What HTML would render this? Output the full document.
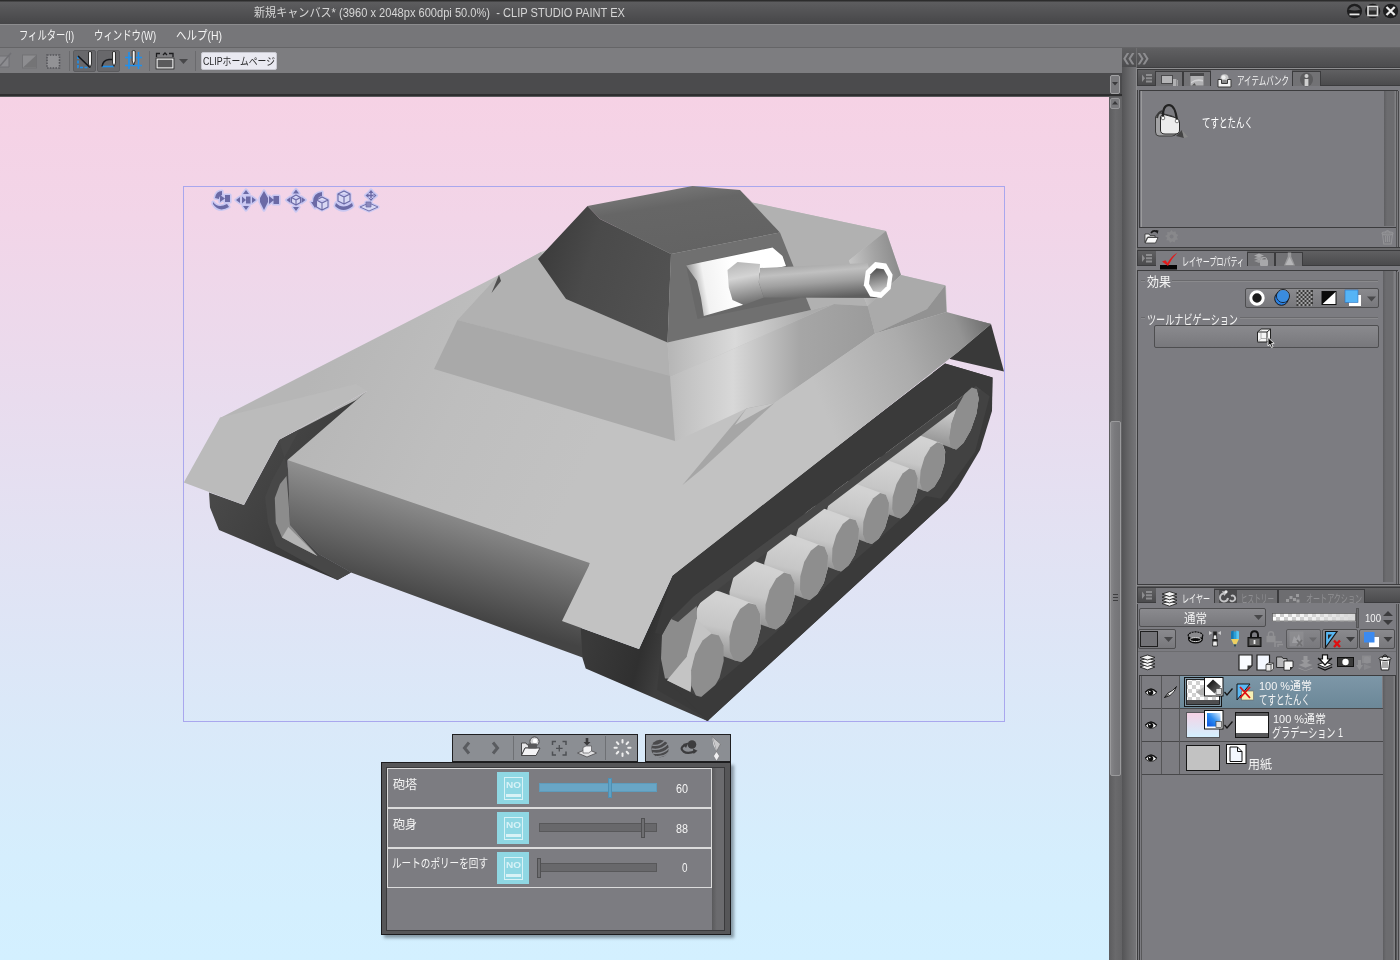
<!DOCTYPE html>
<html lang="ja">
<head>
<meta charset="utf-8">
<title>CLIP STUDIO PAINT EX</title>
<style>
*{box-sizing:border-box;margin:0;padding:0}
html,body{width:1400px;height:960px;overflow:hidden;background:#7d7d82}
body{position:relative;font-family:"Liberation Sans","Noto Sans CJK JP",sans-serif;color:#f0f0f0;font-size:12px;line-height:1}
.abs{position:absolute}
.tx{position:absolute;white-space:pre;line-height:1;color:#f4f4f4;will-change:transform}
svg{position:absolute;overflow:visible}
#titlebar{left:0;top:0;width:1400px;height:24px;background:linear-gradient(#2c2c2c 0,#2c2c2c 1px,#5d5d5f 2px,#464648 100%)}
#menubar{left:0;top:24px;width:1400px;height:24px;background:#767679;border-top:1px solid #8c8c8e;border-bottom:1px solid #656567}
#toolbar{left:0;top:48px;width:1122px;height:25px;background:#7d7d80}
#tabband{left:0;top:73px;width:1122px;height:22px;background:#4b4b4d}
#tabline{left:0;top:94px;width:1122px;height:3px;background:linear-gradient(#2e2e2f 0,#2e2e2f 2px,#5a5a5c 2px)}
#canvas{left:0;top:97px;width:1109px;height:863px;background:linear-gradient(#f6d2e5 0,#f2d5e8 14%,#e9dcee 35%,#e2e2f3 52%,#dbe8f8 70%,#d5eefd 88%,#d3f0ff 100%)}
#vscroll{left:1109px;top:97px;width:13px;height:863px;background:linear-gradient(90deg,#5c5c5e,#6a6a6c 50%,#636365)}
#splitter{left:1122px;top:67px;width:15px;height:893px;background:linear-gradient(90deg,#545456,#68686a 50%,#757578 93%,#8c8c8e 94%)}
#dockhead{left:1122px;top:48px;width:278px;height:20px;background:linear-gradient(#606062,#4c4c4e);border-bottom:1px solid #3e3e40}
#rightbg{left:1137px;top:68px;width:263px;height:892px;background:#5a5a5c}
</style>
</head>
<body>
<div id="titlebar" class="abs"></div>
<div class="tx" style="left:254px;top:7px;font-size:12px;color:#d6d6d6"><span style="display:inline-block;transform-origin:0 50%;transform:scaleX(0.9240)">新規キャンバス* (3960 x 2048px 600dpi 50.0%)  - CLIP STUDIO PAINT EX</span></div>
<div id="menubar" class="abs"></div>
<div class="tx" style="left:19px;top:30px;font-size:12.5px"><span style="display:inline-block;transform-origin:0 50%;transform:scaleX(0.7426)">フィルター(I)</span></div>
<div class="tx" style="left:94px;top:30px;font-size:12.5px"><span style="display:inline-block;transform-origin:0 50%;transform:scaleX(0.7504)">ウィンドウ(W)</span></div>
<div class="tx" style="left:176px;top:30px;font-size:12.5px"><span style="display:inline-block;transform-origin:0 50%;transform:scaleX(0.8385)">ヘルプ(H)</span></div>
<div id="toolbar" class="abs"></div>
<div id="tabband" class="abs"></div>
<div id="tabline" class="abs"></div>
<div id="canvas" class="abs"></div>
<div id="vscroll" class="abs"></div>
<div id="dockhead" class="abs"></div>
<div id="rightbg" class="abs"></div>
<div id="splitter" class="abs"></div>
<svg id="tank" style="left:0;top:0" width="1400" height="960" viewBox="0 0 1400 960">
<defs>
<linearGradient id="gHullFront" gradientUnits="userSpaceOnUse" x1="440" y1="500" x2="412" y2="600"><stop offset="0" stop-color="#929292"/><stop offset="0.4" stop-color="#727272"/><stop offset="1" stop-color="#444444"/></linearGradient>
<linearGradient id="gTurL" gradientUnits="userSpaceOnUse" x1="540" y1="260" x2="670" y2="300"><stop offset="0" stop-color="#3c3c3c"/><stop offset="0.35" stop-color="#4a4a4a"/><stop offset="1" stop-color="#525252"/></linearGradient>
<linearGradient id="gTurTop" gradientUnits="userSpaceOnUse" x1="690" y1="186" x2="700" y2="250"><stop offset="0" stop-color="#757575"/><stop offset="0.25" stop-color="#666"/><stop offset="1" stop-color="#636363"/></linearGradient>
<linearGradient id="gSide" gradientUnits="userSpaceOnUse" x1="670" y1="0" x2="880" y2="0"><stop offset="0" stop-color="#bcbcbc"/><stop offset="0.3" stop-color="#d8d8d8"/><stop offset="0.62" stop-color="#a6a6a6"/><stop offset="1" stop-color="#9a9a9a"/></linearGradient>
<linearGradient id="gDeck" gradientUnits="userSpaceOnUse" x1="665" y1="0" x2="840" y2="0"><stop offset="0" stop-color="#b4b4b4"/><stop offset="0.4" stop-color="#dadada"/><stop offset="0.8" stop-color="#acacac"/><stop offset="1" stop-color="#a8a8a8"/></linearGradient>
<linearGradient id="gRearBox" gradientUnits="userSpaceOnUse" x1="852" y1="270" x2="900" y2="262"><stop offset="0" stop-color="#c4c4c4"/><stop offset="0.5" stop-color="#a4a4a4"/><stop offset="1" stop-color="#8a8a8a"/></linearGradient>
<linearGradient id="gBarrel" gradientUnits="userSpaceOnUse" x1="815" y1="263" x2="818" y2="299"><stop offset="0" stop-color="#a6a6a6"/><stop offset="0.25" stop-color="#c0c0c0"/><stop offset="0.55" stop-color="#a0a0a0"/><stop offset="0.85" stop-color="#747474"/><stop offset="1" stop-color="#5e5e5e"/></linearGradient>
<linearGradient id="gCollar" gradientUnits="userSpaceOnUse" x1="740" y1="262" x2="748" y2="305"><stop offset="0" stop-color="#b8b8b8"/><stop offset="0.35" stop-color="#d4d4d4"/><stop offset="0.7" stop-color="#9c9c9c"/><stop offset="1" stop-color="#6c6c6c"/></linearGradient>
<linearGradient id="gMant" gradientUnits="userSpaceOnUse" x1="690" y1="292" x2="735" y2="284"><stop offset="0" stop-color="#8e8e8e"/><stop offset="0.35" stop-color="#f2f2f2"/><stop offset="1" stop-color="#ffffff"/></linearGradient>
<linearGradient id="gHole" gradientUnits="userSpaceOnUse" x1="876" y1="268" x2="881" y2="293"><stop offset="0" stop-color="#4e4e4e"/><stop offset="0.5" stop-color="#909090"/><stop offset="1" stop-color="#d0d0d0"/></linearGradient>
<linearGradient id="gFendR" gradientUnits="userSpaceOnUse" x1="820" y1="400" x2="995" y2="330"><stop offset="0" stop-color="#c2c2c2"/><stop offset="0.5" stop-color="#acacac"/><stop offset="0.82" stop-color="#949494"/><stop offset="1" stop-color="#6a6a6a"/></linearGradient>
<linearGradient id="gGlacis" gradientUnits="userSpaceOnUse" x1="300" y1="400" x2="560" y2="520"><stop offset="0" stop-color="#b6b6b6"/><stop offset="0.5" stop-color="#bebebe"/><stop offset="1" stop-color="#c2c2c2"/></linearGradient>
<linearGradient id="gLTrack" gradientUnits="userSpaceOnUse" x1="215" y1="500" x2="340" y2="575"><stop offset="0" stop-color="#484848"/><stop offset="1" stop-color="#343434"/></linearGradient>
<linearGradient id="gTrkFront" gradientUnits="userSpaceOnUse" x1="585" y1="650" x2="660" y2="670"><stop offset="0" stop-color="#3a3a3a"/><stop offset="0.7" stop-color="#303030"/><stop offset="1" stop-color="#3e3e3e"/></linearGradient>
<linearGradient id="gw0" gradientUnits="userSpaceOnUse" x1="954.0" y1="385.5" x2="942.0" y2="451.5"><stop offset="0" stop-color="#d2d2d2"/><stop offset="0.45" stop-color="#c6c6c6"/><stop offset="1" stop-color="#8a8a8a"/></linearGradient>
<linearGradient id="gw1" gradientUnits="userSpaceOnUse" x1="922.5" y1="441.0" x2="910.5" y2="493.0"><stop offset="0" stop-color="#d2d2d2"/><stop offset="0.45" stop-color="#c6c6c6"/><stop offset="1" stop-color="#8a8a8a"/></linearGradient>
<linearGradient id="gw2" gradientUnits="userSpaceOnUse" x1="895.0" y1="467.5" x2="883.0" y2="519.5"><stop offset="0" stop-color="#d2d2d2"/><stop offset="0.45" stop-color="#c6c6c6"/><stop offset="1" stop-color="#8a8a8a"/></linearGradient>
<linearGradient id="gw3" gradientUnits="userSpaceOnUse" x1="866.0" y1="492.0" x2="854.0" y2="545.0"><stop offset="0" stop-color="#d2d2d2"/><stop offset="0.45" stop-color="#c6c6c6"/><stop offset="1" stop-color="#8a8a8a"/></linearGradient>
<linearGradient id="gw4" gradientUnits="userSpaceOnUse" x1="835.5" y1="517.5" x2="823.5" y2="572.5"><stop offset="0" stop-color="#d2d2d2"/><stop offset="0.45" stop-color="#c6c6c6"/><stop offset="1" stop-color="#8a8a8a"/></linearGradient>
<linearGradient id="gw5" gradientUnits="userSpaceOnUse" x1="804.0" y1="544.0" x2="792.0" y2="601.0"><stop offset="0" stop-color="#d2d2d2"/><stop offset="0.45" stop-color="#c6c6c6"/><stop offset="1" stop-color="#8a8a8a"/></linearGradient>
<linearGradient id="gw6" gradientUnits="userSpaceOnUse" x1="770.0" y1="571.5" x2="758.0" y2="630.5"><stop offset="0" stop-color="#d2d2d2"/><stop offset="0.45" stop-color="#c6c6c6"/><stop offset="1" stop-color="#8a8a8a"/></linearGradient>
<linearGradient id="gw7" gradientUnits="userSpaceOnUse" x1="735.0" y1="602.0" x2="723.0" y2="663.0"><stop offset="0" stop-color="#d2d2d2"/><stop offset="0.45" stop-color="#c6c6c6"/><stop offset="1" stop-color="#8a8a8a"/></linearGradient>
</defs>
<rect x="183.500" y="186.500" width="821" height="535" fill="none" stroke="#a9a7ee" stroke-width="1"/>
<!-- rear right fender underside -->
<polygon points="946,313 991,324 1004,371.500 950,359 946,345" fill="#393939"/>
<!-- right track base -->
<polygon points="672.500,575.500 700,552 945,363.500 992.500,377.500 992,411 980,450 958,487 948,500 707.500,721 655,692 652,640" fill="#3a3a3a"/>
<polygon points="579,628 562,621 639,649 672.500,575.500 662,640 657,690 709,720 707.500,721 585.700,668.600 580,650" fill="url(#gTrkFront)"/>
<!-- opening inner (slightly lighter dark) -->
<polygon points="696,597 976,386 990,395 975,452 940,500 700,698 666,679 661,658 662,635 671,619" fill="#424242"/>
<!-- wheels rear→front -->
<polygon points="909.4,423.4 911.6,408.5 917.2,392.3 924.6,379.2 931.8,372.7 937.0,374.4 977.0,389.2 978.6,398.9 976.4,413.7 970.8,429.9 963.4,443.0 956.2,449.5 951.0,447.8 911.0,432.9" fill="url(#gw0)"/>
<polygon points="970.8,429.9 963.4,443.0 956.2,449.5 951.1,447.8 949.4,438.1 951.6,423.3 957.2,407.1 964.6,394.0 971.8,387.5 976.9,389.2 978.6,398.9 976.4,413.7" fill="#8e8e8e"/>
<polygon points="883.8,469.0 884.6,457.1 888.5,444.2 894.6,433.9 901.2,428.9 906.5,430.5 942.5,443.8 945.2,451.6 944.4,463.6 940.5,476.5 934.4,486.8 927.8,491.8 922.5,490.2 886.5,476.9" fill="url(#gw1)"/>
<polygon points="940.5,476.5 934.4,486.8 927.8,491.8 922.5,490.2 919.8,482.3 920.6,470.4 924.5,457.5 930.6,447.2 937.2,442.2 942.5,443.8 945.2,451.7 944.4,463.6" fill="#8e8e8e"/>
<polygon points="856.2,495.6 856.7,483.6 860.5,470.7 866.6,460.3 873.4,455.3 878.9,456.9 914.9,470.2 917.8,478.1 917.3,490.1 913.5,503.0 907.4,513.4 900.6,518.4 895.1,516.8 859.1,503.4" fill="url(#gw2)"/>
<polygon points="913.5,503.0 907.4,513.4 900.6,518.4 895.1,516.8 892.2,508.9 892.7,496.9 896.5,484.0 902.6,473.6 909.4,468.6 914.9,470.2 917.8,478.1 917.3,490.1" fill="#8e8e8e"/>
<polygon points="827.0,520.9 827.3,508.7 831.1,495.5 837.3,484.9 844.2,479.8 849.9,481.4 885.9,494.7 889.0,502.8 888.7,515.0 884.9,528.2 878.7,538.8 871.8,543.9 866.1,542.3 830.1,529.0" fill="url(#gw3)"/>
<polygon points="884.9,528.2 878.7,538.8 871.8,543.9 866.1,542.3 863.0,534.3 863.3,522.0 867.1,508.8 873.3,498.2 880.2,493.1 885.9,494.7 889.0,502.7 888.7,515.0" fill="#8e8e8e"/>
<polygon points="796.0,548.0 796.4,535.3 800.3,521.6 806.7,510.6 813.8,505.3 819.8,507.0 855.8,520.3 859.0,528.6 858.6,541.4 854.7,555.0 848.3,566.0 841.2,571.4 835.2,569.7 799.2,556.4" fill="url(#gw4)"/>
<polygon points="854.7,555.0 848.3,566.0 841.2,571.4 835.2,569.7 832.0,561.4 832.4,548.6 836.3,535.0 842.7,524.0 849.8,518.6 855.8,520.3 859.0,528.6 858.6,541.4" fill="#8e8e8e"/>
<polygon points="764.0,576.2 764.3,563.0 768.2,548.8 774.8,537.4 782.2,531.8 788.5,533.5 824.5,546.8 828.0,555.5 827.7,568.6 823.8,582.9 817.2,594.3 809.8,599.9 803.5,598.2 767.5,584.8" fill="url(#gw5)"/>
<polygon points="823.8,582.9 817.2,594.3 809.8,599.9 803.5,598.2 800.0,589.5 800.3,576.4 804.2,562.1 810.8,550.7 818.2,545.1 824.5,546.8 828.0,555.5 827.7,568.6" fill="#8e8e8e"/>
<polygon points="729.5,605.4 729.5,591.7 733.5,577.0 740.2,565.1 748.0,559.3 754.7,561.0 790.7,574.4 794.5,583.3 794.5,597.0 790.5,611.7 783.8,623.6 776.0,629.4 769.3,627.6 733.3,614.3" fill="url(#gw6)"/>
<polygon points="790.5,611.7 783.8,623.6 776.0,629.4 769.3,627.6 765.4,618.7 765.5,605.0 769.5,590.3 776.2,578.4 784.0,572.6 790.7,574.4 794.6,583.3 794.5,597.0" fill="#8e8e8e"/>
<polygon points="693.4,623.4 697.2,608.1 704.2,595.8 712.5,589.7 719.8,591.5 755.8,604.8 760.2,614.1 760.6,628.2 756.8,643.6 749.8,655.9 741.5,662.0 734.2,660.2 698.2,646.9 693.8,637.6" fill="url(#gw7)"/>
<polygon points="756.8,643.6 749.8,655.9 741.5,662.0 734.2,660.2 729.8,650.9 729.4,636.7 733.2,621.4 740.2,609.1 748.5,603.0 755.8,604.8 760.2,614.1 760.6,628.3" fill="#8e8e8e"/>
<!-- front sprocket -->
<polygon points="696.500,599 697,619 690,652 671,678.500 665,678.500 661,658.700 662,635 670.800,619" fill="#8c8c8c"/>
<polygon points="696.500,619 712,634 694,660 690.600,692 666.800,680.500 686.600,656.700" fill="#c4c4c4"/>
<polygon points="719.6,677.4 712.2,690.8 703.5,697.5 695.9,695.6 691.3,685.6 691.1,670.3 695.2,653.8 702.6,640.4 711.3,633.7 718.9,635.6 723.5,645.6 723.7,660.9" fill="#8e8e8e"/>
<!-- upper track band (covers wheel tops) -->
<polygon points="672.500,575.500 945,363.500 992.500,377.500 992,398 976,386 694,596 671,619 662,635 655,633" fill="#3a3a3a"/>
<polygon points="694,596 976,386 981,390 700,603 678,622 671,619" fill="#474747"/>
<!-- IDLERFACE -->
<polygon points="970.8,429.9 963.4,443.0 956.2,449.5 951.1,447.8 949.4,438.1 951.6,423.3 957.2,407.1 964.6,394.0 971.8,387.5 976.9,389.2 978.6,398.9 976.4,413.7" fill="#8e8e8e"/>
<!-- lower band -->
<polygon points="700,698 740,664 775,633 810,601.500 840,573 872,545.500 900,520 926,496 948,500 707.500,721 666,680" fill="#3a3a3a"/>
<!-- hull body silhouette (light) -->
<polygon points="220,418 499,275 541,252 600,230 752,202.500 886,231 901,275 946,286 947,313 991,324 958,352 672.500,575.500 600,552 593,566 287.500,461 279,440 367,391" fill="url(#gGlacis)"/>
<!-- hull front face -->
<polygon points="287.500,460 589.700,563 580.800,630 582.500,657.500 351,572.500 320,555 290,525" fill="url(#gHullFront)"/>
<!-- left track / underside dark -->
<polygon points="279,440 356,400 367,391 287.500,460 290,525 320,555 351,572.500 337.500,580 219,530 210,507.500 209,492.500 244,505" fill="url(#gLTrack)"/>
<polygon points="279,440 300,429 272,480 265,497 268,523 276,546 337.500,580 351,572.500 320,555 290,525 288,470" fill="#474747"/>
<polygon points="280,484 286.500,476 288.500,500 290,525 317.500,556 293.500,543.800 282,537.500 275.800,523 274.800,498" fill="#8c8c8c"/><polygon points="282,537.500 288.300,527 317.500,556 293.500,543.800" fill="#b4b4b4"/>
<!-- left fender -->
<polygon points="220,417.500 183.800,482.500 243.800,505 278.800,440 367,391 356,384" fill="#bbbbbb"/>
<!-- superstructure top left of turret -->
<polygon points="457.500,320 499,275 541,252 566,299 667.500,342.500 670,377" fill="#b1b1b1"/>
<!-- deck right/behind turret -->
<polygon points="740,190 752.500,202.500 886,231 848.800,260.500 867.500,306 834,304 811,310 780,232.500" fill="#b1b1b1"/>
<!-- deck in front of turret w/ highlight + side face -->
<polygon points="667.500,342.500 811,310 834,304 670,377" fill="url(#gDeck)"/>
<polygon points="670,377 834,304 868,306 875,333.600 774.300,403 746.400,408.600 674.600,441.800" fill="url(#gSide)"/>
<!-- rear box faces -->
<polygon points="886,231 901,275 867.500,306 848.800,260.500" fill="url(#gRearBox)"/>
<polygon points="867.500,306 901,275 945.300,285.300 927,309 875,333.600" fill="#aaaaaa"/><polygon points="945.300,285.300 946.500,312 875,333.600 927,309" fill="#929292"/>
<!-- right fender top -->
<polygon points="597.600,548 682,485 746.400,408.600 774.300,403 875,333.600 946.500,312 991,324 958,352 672.500,575.500 639,649 562,621" fill="url(#gFendR)"/>
<!-- groove on fender/hull -->
<polygon points="682.500,485 746.400,408.600 774.300,403 702,469" fill="#a6a6a6"/><polygon points="746.400,408.600 774.300,403 735,425" fill="#c6c6c6"/>
<!-- superstructure front slope -->
<polygon points="457.500,320 670,376 675,441 434,369" fill="#a9a9a9"/>
<!-- hull notch -->
<polygon points="499,275 501,281 491.500,293" fill="#505050"/>
<!-- turret -->
<polygon points="587.500,206 692.500,186 740,190 780,232.500 671,254 600,219" fill="url(#gTurTop)"/>
<polygon points="587.500,206 600,219 671,254 667.500,342.500 566,299 538,259" fill="url(#gTurL)"/>
<polygon points="671,254 780,232.500 811,310 667.500,342.500" fill="#707070"/>
<!-- mantlet recess -->
<polygon points="686,265 772,247 783,256 800,298 697.500,319" fill="#686868"/>
<polygon points="686,265.500 772.500,247.500 782.500,256 786,266 760,272 742.500,305 703.800,316 701,298 697,281" fill="url(#gMant)"/>
<polygon points="727.500,270 737.500,262 760,264 758.800,282.500 763.800,297.500 743.800,305 732.500,300 728.800,287.500" fill="url(#gCollar)"/>
<polygon points="760,268 867.500,263 877.500,298 763.800,297.500 758.800,282.500" fill="url(#gBarrel)"/>
<polygon points="890.6,289.0 881.3,298.0 870.2,296.4 863.8,285.2 865.8,271.0 875.1,262.0 886.2,263.6 892.6,274.8" fill="#fff"/>
<polygon points="886.6,286.3 880.5,292.3 873.2,291.3 869.0,283.8 870.4,274.3 876.5,268.3 883.8,269.3 888.0,276.8" fill="url(#gHole)"/>
</svg>
<svg style="left:210px;top:188px" width="172" height="26" viewBox="0 0 172 26">
<g stroke="#c9c8f2" stroke-width="3.200" stroke-linejoin="round" fill="#c9c8f2">
<path d="M5 10 Q6 3 12 3 L12 7 Q9 8 9 11Z M3 14 Q8 21 17 16 L19 19 Q9 25 3 16Z M10 7 L15 10.500 L10 14Z M15 7 H20 V14 H15Z"/>
<path d="M36 2 L39 6 H33Z M36 22 L39 18 H33Z M26 12 L30 9 V15Z M46 12 L42 9 V15Z M32 8.500 L36 12 L32 15.500Z M36 8.500 H40.500 V15.500 H36Z"/>
<path d="M54 3 L58 10 H50Z M54 22 L58 14 H50Z M50 10 H58 V14 H50Z M59 8 L64 12 L59 16Z M63.500 8 H69 V16 H63.500Z"/>
<path d="M86 1.500 L89 5.500 H83Z M86 23 L89 19 H83Z M76.500 12 L80.500 9 V15Z M95.500 12 L91.500 9 V15Z M86 7 L90.500 9.500 V14.500 L86 17 L81.500 14.500 V9.500Z"/>
<path d="M103 14 Q103 5 112 4 L112 8 Q107 9 107 14 L109 14 L105 20 L101 14Z M112 9 L118 12 V19 L112 22 L106.500 19 V12Z"/>
<path d="M134 3 L140 6 V13 L134 16 L128 13 V6Z M126 15 Q133 22 142 15 L143 18 Q133 26 125 18Z"/>
<path d="M161 2 L163.500 5 H158.500Z M161 13 L163.500 10 H158.500Z M155.500 7.500 L158.500 5 V10Z M166.500 7.500 L163.500 5 V10Z M150 19 L159 15 L168 19 L159 23Z M156 14 H161 V19 H156Z"/>
</g>
<g fill="#6b6aa6">
<path d="M5 10 Q6 3 12 3 L12 7 Q9 8 9 11Z M3 14 Q8 21 17 16 L19 19 Q9 25 3 16Z M10 7 L15 10.500 L10 14Z M15 7 H20 V14 H15Z"/>
<path d="M36 2 L39 6 H33Z M36 22 L39 18 H33Z M26 12 L30 9 V15Z M46 12 L42 9 V15Z M32 8.500 L36 12 L32 15.500Z M36 8.500 H40.500 V15.500 H36Z"/>
<path d="M54 3 L58 10 H50Z M54 22 L58 14 H50Z M50 10 H58 V14 H50Z M59 8 L64 12 L59 16Z M63.500 8 H69 V16 H63.500Z"/>
<path d="M86 1.500 L89 5.500 H83Z M86 23 L89 19 H83Z M76.500 12 L80.500 9 V15Z M95.500 12 L91.500 9 V15Z"/>
<path d="M103 14 Q103 5 112 4 L112 8 Q107 9 107 14 L109 14 L105 20 L101 14Z"/>
<path d="M126 15 Q133 22 142 15 L143 18 Q133 26 125 18Z"/>
<path d="M161 2 L163.500 5 H158.500Z M161 13 L163.500 10 H158.500Z M155.500 7.500 L158.500 5 V10Z M166.500 7.500 L163.500 5 V10Z M160.300 4 H161.700 V11 H160.300Z M157.500 6.800 H164.500 V8.200 H157.500Z"/>
</g>
<g fill="#d8d8f4" stroke="#6b6aa6" stroke-width="1.100" stroke-linejoin="round">
<path d="M86 7 L90.500 9.500 V14.500 L86 17 L81.500 14.500 V9.500Z M81.500 9.500 L86 12 L90.500 9.500 M86 12 V17"/>
<path d="M112 9 L118 12 V19 L112 22 L106.500 19 V12Z M106.500 12 L112 15 L118 12 M112 15 V22"/>
<path d="M134 3 L140 6 V13 L134 16 L128 13 V6Z M128 6 L134 9 L140 6 M134 9 V16"/>
<path d="M150 19 L159 15 L168 19 L159 23Z" stroke-width="0.900"/><path d="M156 14 H161 V19 H156Z" fill="#8a89bc" stroke-width="0.700"/>
</g>
</svg>


<!-- toolbar icons -->
<div class="abs" style="left:69px;top:51px;width:1px;height:20px;background:#6a6a6d"></div>
<div class="abs" style="left:149px;top:51px;width:1px;height:20px;background:#6a6a6d"></div>
<div class="abs" style="left:195px;top:51px;width:1px;height:20px;background:#6a6a6d"></div>
<div class="abs" style="left:73px;top:50px;width:23px;height:22px;background:#68686b;border:1px solid #5c5c5f;border-radius:2px"></div>
<div class="abs" style="left:97px;top:50px;width:23px;height:22px;background:#68686b;border:1px solid #5c5c5f;border-radius:2px"></div>
<svg style="left:0;top:48px" width="200" height="25" viewBox="0 0 200 25">
<g opacity="0.55"><path d="M0 8 H9 V19 H0" fill="#9a9a9d" stroke="#66666a" stroke-width="1"/><path d="M0 18 L11 5" stroke="#66666a" stroke-width="1.500"/></g>
<g opacity="0.6"><rect x="22.500" y="7" width="14" height="13" fill="#98989b" stroke="#6c6c6f" stroke-width="1"/><path d="M23 19.500 L36 7.500 L36 19.500Z" fill="#6e6e71"/></g>
<rect x="47" y="7" width="12.500" height="13" fill="#929295" stroke="#56565a" stroke-width="1.600" stroke-dasharray="1.600 1.200"/>
<!-- btn1 -->
<path d="M78 8 L78 19.500 L90 19.500" fill="none" stroke="#1e90ee" stroke-width="1.600" stroke-dasharray="3 1.500"/><path d="M78 8 L90 19.500" stroke="#16181c" stroke-width="1.600"/><path d="M88.500 4 Q90 3 91.500 4 L91.500 16 L90 19.500 L88.500 16Z" fill="#f2f2f2" stroke="#222" stroke-width="0.900"/>
<!-- btn2 -->
<path d="M102 18.500 H114 " stroke="#1e90ee" stroke-width="1.600"/><path d="M102 18.500 Q103 12 109 11.500 L114 11.500" fill="none" stroke="#16181c" stroke-width="1.600"/><path d="M112.500 4 Q114 3 115.500 4 L115.500 15 L114 18.500 L112.500 15Z" fill="#f2f2f2" stroke="#222" stroke-width="0.900"/>
<!-- icon3 -->
<path d="M125 9.500 H142 M125 17.500 H142 M129 4 V21 M138.500 4 V21" stroke="#1e90ee" stroke-width="1.600"/><path d="M132.200 3 Q133.700 2 135.200 3 L135.200 13 L133.700 17 L132.200 13Z" fill="#f2f2f2" stroke="#222" stroke-width="0.900"/>
<!-- frame icon -->
<path d="M156.500 9 V5.500 H160 M169 5.500 H173 V9 M163 7 L165 5 L167 7" fill="none" stroke="#1c1c1e" stroke-width="1.300"/><rect x="157" y="11" width="16" height="9" fill="#5a5a5c" stroke="#f4f4f4" stroke-width="1.300"/><rect x="156" y="10" width="18" height="11" fill="none" stroke="#222" stroke-width="0.700"/>
<path d="M179 11 H188 L183.500 16Z" fill="#48484a"/>
</svg>
<div class="abs" style="left:201px;top:52px;width:76px;height:18px;background:#e9e9f1;border:1px solid #c8c8d0;border-radius:2px"></div>
<div class="tx" style="left:203px;top:56px;font-size:10.5px;color:#2a2a2c"><span style="display:inline-block;transform-origin:0 50%;transform:scaleX(0.8389)">CLIPホームページ</span></div>
<!-- window buttons -->
<svg style="left:1346px;top:3px" width="54" height="18" viewBox="0 0 54 18">
<ellipse cx="8.500" cy="8" rx="7.600" ry="7.300" fill="#1e1e1f"/><ellipse cx="26.700" cy="8" rx="7.600" ry="7.300" fill="#1e1e1f"/><ellipse cx="44.600" cy="8" rx="7.600" ry="7.300" fill="#1e1e1f"/>
<path d="M2.500 6.500 Q8.500 -0.500 14.500 6.500 Q8.500 8.500 2.500 6.500Z" fill="#58585a"/><rect x="3.500" y="10.500" width="10" height="1.800" fill="#e8e8e8"/>
<rect x="22" y="3.500" width="9.500" height="9" fill="#2c2c2c" stroke="#d8d8d8" stroke-width="1.700"/><rect x="23" y="4.500" width="7.500" height="3" fill="#6a6a6c"/>
<path d="M40.500 4 L48.700 12 M48.700 4 L40.500 12" stroke="#ececec" stroke-width="2.200"/>
</svg>
<!-- canvas scrollbar buttons -->
<div class="abs" style="left:1110px;top:75px;width:10px;height:19px;background:#7a7a7d;border:1px solid #a2a2a4;border-radius:2px"></div>
<svg style="left:1112px;top:82px" width="6" height="4"><path d="M0 0H6L3 3.500Z" fill="#3a3a3c"/></svg>
<div class="abs" style="left:1110px;top:98px;width:10px;height:11px;background:#7a7a7d;border:1px solid #98989a;border-radius:2px"></div>
<svg style="left:1112px;top:101px" width="6" height="4"><path d="M0 3.500H6L3 0Z" fill="#3a3a3c"/></svg>
<div class="abs" style="left:1110px;top:421px;width:11px;height:355px;background:linear-gradient(90deg,#858588,#7a7a7d 40%,#737376);border:1px solid #9a9a9c;border-radius:2px"></div>
<svg style="left:1112.500px;top:594px" width="5" height="7"><path d="M0 0.500H5M0 3.500H5M0 6.500H5" stroke="#3e3e40" stroke-width="1"/></svg>

<style>
.tabbar{position:absolute;left:1137px;width:263px;height:17px;background:linear-gradient(#606062,#4b4b4d);border:1px solid #3c3c3e;border-right:none}
.tab{position:absolute;height:15px;background:#727275;border:1px solid #3c3c3e;border-bottom:none}
.tabA{position:absolute;height:21px;background:#7c7c81}
.pframe{position:absolute;left:1137px;width:263px;background:#7c7c81}
.pin{position:absolute;background:#7c7c81;border:1px solid #3c3c3e}
.vsb{position:absolute;width:12px;background:linear-gradient(90deg,#5e5e61,#6c6c6f 25%,#6c6c6f 80%,#858588)}
.btn{position:absolute;border:1px solid #4e4e50;border-radius:2px;background:linear-gradient(#8a8a8e,#78787c)}
.ham{position:absolute;width:10px;height:9px}
</style>
<!-- ===== dock head chevrons ===== -->
<svg style="left:1123px;top:52.500px" width="26" height="12" viewBox="0 0 26 12"><g fill="#8d8d90"><path d="M3.800 0 L6.200 0 L2.600 5.700 L6.200 11.400 L3.800 11.400 L0.200 5.700Z"/><path d="M9 0 L11.400 0 L7.800 5.700 L11.400 11.400 L9 11.400 L5.400 5.700Z"/><path d="M14.600 0 L17 0 L20.600 5.700 L17 11.400 L14.600 11.400 L18.200 5.700Z"/><path d="M19.600 0 L22 0 L25.600 5.700 L22 11.400 L19.600 11.400 L23.200 5.700Z"/></g></svg><div class="abs" style="left:1136px;top:48px;width:1px;height:20px;background:#6e6e70"></div>
<div class="abs" style="left:1137px;top:68px;width:263px;height:1px;background:#8e8e90"></div>

<!-- ===== Panel 1 : item bank ===== -->
<div class="pframe" style="top:69px;height:179px"></div>
<div class="tabbar" style="top:69px"></div>
<div class="tab" style="left:1155px;top:71px;width:28px"></div>
<div class="tab" style="left:1183px;top:71px;width:28px"></div>
<div class="tabA" style="left:1211px;top:70px;width:81px"></div>
<div class="tab" style="left:1292px;top:71px;width:29px"></div>
<div class="pin" style="left:1139px;top:90px;width:259px;height:138px"></div>
<div class="abs" style="left:1137px;top:90px;width:1px;height:158px;background:#3c3c3e"></div>
<div class="abs" style="left:1141px;top:91px;width:1px;height:136px;background:#9a9a9c"></div>
<div class="vsb" style="left:1384px;top:91px;height:135px"></div>
<div class="abs" style="left:1396px;top:91px;width:1px;height:136px;background:#3c3c3e"></div>
<div class="abs" style="left:1137px;top:247px;width:263px;height:3px;background:linear-gradient(#3c3c3e 0,#3c3c3e 1px,#6a6a6c 1px)"></div>
<div class="tx" style="left:1237px;top:75.500px;font-size:11.500px"><span style="display:inline-block;transform-origin:0 50%;transform:scaleX(0.6505)">アイテムバンク</span></div>
<div class="tx" style="left:1202px;top:116px;font-size:13px;color:#fff"><span style="display:inline-block;transform-origin:0 50%;transform:scaleX(0.6537)">てすとたんく</span></div>

<!-- ===== Panel 2 : layer property ===== -->
<div class="pframe" style="top:250px;height:335px"></div>
<div class="tabbar" style="top:250px;height:16px"></div>
<div class="tabA" style="left:1156px;top:251px;width:91px;height:20px"></div>
<div class="tab" style="left:1247px;top:252px;width:28px;height:14px"></div>
<div class="tab" style="left:1275px;top:252px;width:28px;height:14px"></div>
<div class="pin" style="left:1137px;top:270px;width:261px;height:315px;border-right:none"></div>
<div class="abs" style="left:1137px;top:270px;width:1px;height:316px;background:#3c3c3e"></div>
<div class="vsb" style="left:1383px;top:271px;height:311px"></div>
<div class="abs" style="left:1396px;top:271px;width:1px;height:311px;background:#3c3c3e"></div>
<div class="abs" style="left:1137px;top:584px;width:263px;height:3px;background:linear-gradient(#3c3c3e 0,#3c3c3e 1px,#88888a 1px,#88888a 2px,#5a5a5c 2px)"></div>
<div class="tx" style="left:1182px;top:256.500px;font-size:11.500px"><span style="display:inline-block;transform-origin:0 50%;transform:scaleX(0.6091)">レイヤープロパティ</span></div>
<div class="abs" style="left:1172px;top:280px;width:206px;height:2px;background:linear-gradient(#6a6a6d 0,#6a6a6d 1px,#8a8a8d 1px)"></div>
<div class="tx" style="left:1146.500px;top:274.500px;font-size:13px"><span style="display:inline-block;transform-origin:0 50%;transform:scaleX(0.9225)">効果</span></div>
<div class="btn" style="left:1245px;top:288px;width:134px;height:20px"></div>
<div class="abs" style="left:1240px;top:317px;width:138px;height:2px;background:linear-gradient(#6a6a6d 0,#6a6a6d 1px,#8a8a8d 1px)"></div><div class="abs" style="left:1141px;top:317px;width:4px;height:2px;background:linear-gradient(#6a6a6d 0,#6a6a6d 1px,#8a8a8d 1px)"></div><div class="abs" style="left:1141px;top:280px;width:4px;height:2px;background:linear-gradient(#6a6a6d 0,#6a6a6d 1px,#8a8a8d 1px)"></div>
<div class="tx" style="left:1146.500px;top:312.500px;font-size:13px"><span style="display:inline-block;transform-origin:0 50%;transform:scaleX(0.7013)">ツールナビゲーション</span></div>
<div class="btn" style="left:1154px;top:325px;width:225px;height:23px"></div>

<!-- ===== Panel 3 : layers ===== -->
<div class="pframe" style="top:587px;height:373px"></div>
<div class="tabbar" style="top:587px;height:16px"></div>
<div class="tabA" style="left:1156px;top:588px;width:58px;height:19px"></div>
<div class="tab" style="left:1214px;top:589px;width:64px;height:14px;background:#6d6d70"></div>
<div class="tab" style="left:1278px;top:589px;width:87px;height:14px;background:#6d6d70"></div>
<div class="tx" style="left:1182px;top:593.500px;font-size:11px"><span style="display:inline-block;transform-origin:0 50%;transform:scaleX(0.6411)">レイヤー</span></div>
<div class="tx" style="left:1241px;top:593.500px;font-size:11px;color:#909093"><span style="display:inline-block;transform-origin:0 50%;transform:scaleX(0.6000)">ヒストリー</span></div>
<div class="tx" style="left:1306px;top:593.500px;font-size:11px;color:#909093"><span style="display:inline-block;transform-origin:0 50%;transform:scaleX(0.6403)">オートアクション</span></div>
<div class="abs" style="left:1137px;top:604px;width:1px;height:356px;background:#3c3c3e"></div>
<!-- blend mode -->
<div class="btn" style="left:1139px;top:608px;width:127px;height:19px"></div>
<div class="tx" style="left:1184px;top:613px;font-size:12px"><span style="display:inline-block;transform-origin:0 50%;transform:scaleX(0.9577)">通常</span></div>
<svg style="left:1254px;top:615px" width="9" height="5"><path d="M0 0H9L4.5 5Z" fill="#48484a"/></svg>
<div class="tx" style="left:1364.500px;top:613px;font-size:11.500px"><span style="display:inline-block;transform-origin:0 50%;transform:scaleX(0.8339)">100</span></div>
<!-- layer list -->
<div class="pin" style="left:1139px;top:675px;width:259px;height:290px;border-bottom:none"></div>
<div class="abs" style="left:1141px;top:676px;width:1px;height:284px;background:#58585a"></div>
<div class="vsb" style="left:1383px;top:676px;height:284px"></div>
<div class="abs" style="left:1395px;top:676px;width:1px;height:284px;background:#3c3c3e"></div>
<div class="abs" style="left:1180px;top:676px;width:202px;height:33px;background:linear-gradient(#7d97a8,#6b8797)"></div>
<div class="abs" style="left:1142px;top:708px;width:241px;height:1px;background:#48484a"></div>
<div class="abs" style="left:1142px;top:741px;width:241px;height:1px;background:#48484a"></div>
<div class="abs" style="left:1142px;top:774px;width:241px;height:1px;background:#48484a"></div>
<div class="abs" style="left:1161px;top:676px;width:1px;height:98px;background:#555557"></div>
<div class="abs" style="left:1179px;top:676px;width:1px;height:98px;background:#555557"></div>
<div class="tx" style="left:1259px;top:680.500px;font-size:11.500px"><span style="display:inline-block;transform-origin:0 50%;transform:scaleX(0.9531)">100 %通常</span></div>
<div class="tx" style="left:1258.500px;top:693px;font-size:13px"><span style="display:inline-block;transform-origin:0 50%;transform:scaleX(0.6537)">てすとたんく</span></div>
<div class="tx" style="left:1272.500px;top:713.500px;font-size:11.500px"><span style="display:inline-block;transform-origin:0 50%;transform:scaleX(0.9531)">100 %通常</span></div>
<div class="tx" style="left:1271.500px;top:726px;font-size:13px"><span style="display:inline-block;transform-origin:0 50%;transform:scaleX(0.6989)">グラデーション 1</span></div>
<div class="tx" style="left:1248px;top:759px;font-size:12.500px"><span style="display:inline-block;transform-origin:0 50%;transform:scaleX(0.9594)">用紙</span></div>
<div class="abs redge" style="left:1396px;top:91px;width:4px;height:156px;background:linear-gradient(90deg,#555557 0,#555557 1px,#7a7a7d 1px,#7a7a7d 2px,#48484a 2px,#48484a 3px,#858588 3px)"></div>
<div class="abs redge" style="left:1396px;top:272px;width:4px;height:312px;background:linear-gradient(90deg,#555557 0,#555557 1px,#7a7a7d 1px,#7a7a7d 2px,#48484a 2px,#48484a 3px,#858588 3px)"></div>
<div class="abs redge" style="left:1396px;top:604px;width:4px;height:356px;background:linear-gradient(90deg,#555557 0,#555557 1px,#7a7a7d 1px,#7a7a7d 2px,#48484a 2px,#48484a 3px,#858588 3px)"></div>
<!-- hamburger icons -->
<svg style="left:1142px;top:74px" width="10" height="9" viewBox="0 0 10 9"><path d="M0 0.5L3 4.2L0 8Z M4 0h6v2H4z M4 3.2h6v2H4z M4 6.4h6v2H4z" fill="#8c8c8e"/></svg>
<svg style="left:1142px;top:254px" width="10" height="9" viewBox="0 0 10 9"><path d="M0 0.5L3 4.2L0 8Z M4 0h6v2H4z M4 3.2h6v2H4z M4 6.4h6v2H4z" fill="#8c8c8e"/></svg>
<svg style="left:1142px;top:590.500px" width="10" height="9" viewBox="0 0 10 9"><path d="M0 0.5L3 4.2L0 8Z M4 0h6v2H4z M4 3.2h6v2H4z M4 6.4h6v2H4z" fill="#8c8c8e"/></svg>
<!-- panel1 tab icons -->
<svg style="left:1161px;top:75px" width="17" height="11" viewBox="0 0 17 11"><rect x="0.5" y="0.5" width="11" height="8" fill="#b4b4b6" stroke="#4a4a4c"/><rect x="12" y="4" width="3.4" height="7" fill="#b0b0b2"/><rect x="16" y="5" width="1" height="6" fill="#a0a0a2"/></svg>
<svg style="left:1190px;top:73px" width="14" height="13" viewBox="0 0 14 13"><rect x="0" y="0" width="14" height="3" fill="#48484a"/><rect x="0.5" y="3" width="13" height="9.5" fill="#b0b0b2"/><path d="M1 9 Q6 5 13 7 L13 8.5 Q6 7 1 10.5Z" fill="#d0d0d2"/><path d="M2 12.5 L4.5 10 L6 12.5Z" fill="#555"/></svg>
<svg style="left:1217px;top:74px" width="15" height="14" viewBox="0 0 15 14"><circle cx="7.5" cy="4.2" r="4" fill="#c8c8c8"/><circle cx="6.6" cy="3.2" r="2" fill="#f0f0f0"/><rect x="5.2" y="6" width="4.6" height="4" fill="#888"/><path d="M1 5.5 L4.5 5.5 L4.5 9.5 L10.5 9.5 L10.5 5.5 L14 5.5 L14 13 L1 13Z" fill="#f4f4f4" stroke="#3a3a3a" stroke-width="1"/></svg>
<svg style="left:1300px;top:72px" width="13" height="14" viewBox="0 0 13 14"><ellipse cx="6.5" cy="7.5" rx="6.5" ry="7" fill="#5c5c5e"/><circle cx="6.5" cy="4" r="2" fill="#d0d0d0"/><rect x="4.6" y="7" width="3.8" height="7" fill="#d0d0d0"/></svg>
<!-- item icon (bag) -->
<svg style="left:1154px;top:103px" width="34" height="38" viewBox="0 0 34 38">
<path d="M1.5 14 Q2 11 6 10 L18 13 Q22 14 22 18 L22 30 Q22 33 18 33 L5 33 Q1.5 33 1.5 29Z" fill="#a2a2a4" stroke="#3a3a3a" stroke-width="1"/>
<path d="M6.5 14 Q7 11.5 10 11.5 L21 14.5 Q25.5 16 25.5 20 L25.5 27 Q25.5 31 21 31 L11 31 Q6.5 31 6.5 27Z" fill="#ececec" stroke="#2a2a2a" stroke-width="1"/>
<path d="M3 15 Q4 9 8.5 8" fill="none" stroke="#3a3a3a" stroke-width="2"/>
<path d="M9 14 Q8.5 2.5 15 2 Q21 2 23 17" fill="none" stroke="#222" stroke-width="2.2"/>
<circle cx="9" cy="15" r="1.8" fill="#fff" stroke="#333" stroke-width="0.6"/><circle cx="23" cy="18" r="1.8" fill="#fff" stroke="#333" stroke-width="0.6"/>
<path d="M22 33 L28 27 L30 35 Z" fill="#444"/><path d="M28 27 L34 34 L30 35Z" fill="#8a8a8a"/>
</svg>
<!-- panel1 bottom icons -->
<svg style="left:1144px;top:229px" width="15" height="15" viewBox="0 0 15 15"><path d="M1 5 L5 5 L6 6.5 L11 6.5 L11 8 L3.5 8 L1 13.5Z" fill="#f2f2f2" stroke="#333" stroke-width="0.8"/><path d="M3.8 8.5 L14 8.5 L11.5 14 L1.2 14Z" fill="#fafafa" stroke="#333" stroke-width="0.8"/><path d="M7 4 Q9.5 0.5 13 3" fill="none" stroke="#1a1a1a" stroke-width="1.6"/><path d="M11.5 1 L14.5 1.5 L13.5 5Z" fill="#1a1a1a"/></svg>
<svg style="left:1164px;top:229px" width="15" height="15" viewBox="0 0 15 15"><path d="M7.5 1 L9 3 L11.5 2.2 L12 4.8 L14.3 6 L12.8 8 L14 10.5 L11.5 11 L10.5 13.5 L8.3 12.2 L6 14 L5 11.5 L2.3 11.3 L3.2 8.8 L1 7 L3.4 5.7 L3.2 3 L5.8 3.2Z" fill="#88888b"/><circle cx="7.6" cy="7.6" r="2" fill="#7c7c81"/></svg>
<svg style="left:1381px;top:229px" width="13" height="16" viewBox="0 0 13 16"><g fill="none" stroke="#939396" stroke-width="1.1"><path d="M1.5 5 L2.8 15 L10.2 15 L11.5 5Z"/><ellipse cx="6.5" cy="4.5" rx="5.5" ry="1.6"/><path d="M4 4 Q6.5 -1 9 4"/><path d="M4.6 7V13M6.5 7V13M8.4 7V13"/></g></svg>
<!-- panel2 tab icons -->
<svg style="left:1159px;top:252px" width="20" height="18" viewBox="0 0 20 18"><rect x="1" y="13" width="17" height="4.5" fill="#050505"/><path d="M3 9.5 L6.5 8.2 L8.5 11 Q12 4.5 18.5 0.5 Q13 6 9 14 Z" fill="#e21a1a"/></svg>
<svg style="left:1253px;top:253px" width="16" height="13" viewBox="0 0 16 13"><g fill="#a8a8aa"><path d="M1 2.5 L6 0.5 L11 2.5 L6 4.5Z"/><path d="M1 5.3 L6 3.3 L11 5.3 L6 7.3Z" opacity=".8"/><path d="M1 8.1 L6 6.1 L11 8.1 L6 10.1Z" opacity=".7"/><rect x="7" y="6.5" width="8" height="6.5" rx="1"/></g><rect x="8.5" y="4.5" width="5" height="3" rx="1.5" fill="none" stroke="#a8a8aa" stroke-width="1"/></svg>
<svg style="left:1283px;top:252px" width="13" height="14" viewBox="0 0 13 14"><path d="M4.8 0.5 L8.2 0.5 L8.2 4.5 L12 13.5 L1 13.5 L4.8 4.5Z" fill="#9a9a9c"/><path d="M6.5 5 L10.5 13 L2.5 13Z" fill="#b6b6b8"/></svg>
<!-- effect icons -->
<svg style="left:1248px;top:289px" width="130" height="18" viewBox="0 0 130 18">
<circle cx="9" cy="9" r="6.2" fill="#1c1c1c" stroke="#fff" stroke-width="3"/>
<circle cx="33.5" cy="9.5" r="6.8" fill="#2a7fe0" stroke="#16181c" stroke-width="1"/><circle cx="35" cy="7" r="6.5" fill="none" stroke="#16181c" stroke-width="0.9"/><circle cx="35" cy="7" r="6" fill="#3a8cdf"/>
<rect x="48.500" y="1.000" width="16.500" height="16.000" fill="#3a3a3a"/>
<g fill="#a2a2a4"><rect x="48.5" y="1" width="2" height="2"/><rect x="52.5" y="1" width="2" height="2"/><rect x="56.5" y="1" width="2" height="2"/><rect x="60.500" y="1" width="2" height="2"/><rect x="50.5" y="3" width="2" height="2"/><rect x="54.5" y="3" width="2" height="2"/><rect x="58.5" y="3" width="2" height="2"/><rect x="62.5" y="3" width="2" height="2"/><rect x="48.5" y="5" width="2" height="2"/><rect x="52.5" y="5" width="2" height="2"/><rect x="56.5" y="5" width="2" height="2"/><rect x="60.500" y="5" width="2" height="2"/><rect x="50.5" y="7" width="2" height="2"/><rect x="54.5" y="7" width="2" height="2"/><rect x="58.5" y="7" width="2" height="2"/><rect x="62.5" y="7" width="2" height="2"/><rect x="48.5" y="9" width="2" height="2"/><rect x="52.5" y="9" width="2" height="2"/><rect x="56.5" y="9" width="2" height="2"/><rect x="60.500" y="9" width="2" height="2"/><rect x="50.5" y="11" width="2" height="2"/><rect x="54.5" y="11" width="2" height="2"/><rect x="58.5" y="11" width="2" height="2"/><rect x="62.5" y="11" width="2" height="2"/><rect x="48.5" y="13" width="2" height="2"/><rect x="52.5" y="13" width="2" height="2"/><rect x="56.5" y="13" width="2" height="2"/><rect x="60.500" y="13" width="2" height="2"/><rect x="50.5" y="15" width="2" height="2"/><rect x="54.5" y="15" width="2" height="2"/><rect x="58.5" y="15" width="2" height="2"/><rect x="62.5" y="15" width="2" height="2"/></g>
<rect x="74" y="2.500" width="14" height="13" fill="#fff" stroke="#111" stroke-width="1"/><path d="M74 2.5 L88 2.5 L74 15.500Z" fill="#0a0a0a"/>
<rect x="101" y="6" width="12" height="11" fill="#fff"/><rect x="97" y="1" width="13" height="12.500" fill="#55b4f6" stroke="#2a70c0" stroke-width="0.600"/>
<path d="M119 7.500 H128 L123.500 12.500Z" fill="#4a4a4c"/>
</svg>
<!-- cube + cursor -->
<svg style="left:1256px;top:328px" width="20" height="20" viewBox="0 0 20 20"><path d="M1.500 4 L5 1 L14.500 1 L14.500 11 L11 14 L1.500 14Z" fill="#f4f4f4" stroke="#222" stroke-width="1"/><path d="M1.500 4 L11 4 L14.500 1 M11 4 L11 14" fill="none" stroke="#222" stroke-width="1"/><path d="M5 1 L5 10.500 L1.500 14 M5 10.500 L14.500 10.500" fill="none" stroke="#888" stroke-width="0.600"/><path d="M12 9.500 L12 18 L14 16.200 L15.500 19.500 L17 18.800 L15.600 15.600 L18.200 15.400Z" fill="#111" stroke="#fff" stroke-width="0.800"/></svg>

<!-- panel3 tab icons -->
<svg style="left:1161px;top:591px" width="17" height="16" viewBox="0 0 17 16"><g stroke="#222" stroke-width="0.9" fill="#f4f4f4"><path d="M1 12.500 L8.500 10 L16 12.500 L8.500 15.200Z"/><path d="M1 9.300 L8.500 6.800 L16 9.300 L8.500 12Z"/><path d="M1 6.100 L8.500 3.600 L16 6.100 L8.500 8.800Z"/><path d="M1 3 L8.500 0.600 L16 3 L8.500 5.600Z"/></g></svg>
<svg style="left:1219px;top:590px" width="18" height="13" viewBox="0 0 18 13"><rect x="0" y="0" width="18" height="13" fill="#4c4c4e"/><path d="M5 3.500 A4 4 0 1 0 9 8" fill="none" stroke="#c4c4c6" stroke-width="2"/><path d="M3 1 L8 2 L5.500 6Z" fill="#c4c4c6"/><path d="M12 6 A2.800 2.800 0 1 1 11 10" fill="none" stroke="#c4c4c6" stroke-width="1.800"/><circle cx="7" cy="1.800" r="1.600" fill="#e8e8e8"/></svg>
<svg style="left:1286px;top:593px" width="14" height="10" viewBox="0 0 14 10"><g fill="#9a9a9c"><rect x="0" y="6" width="3" height="3"/><rect x="3.500" y="3" width="3" height="3"/><rect x="7" y="5" width="3" height="3"/><rect x="10" y="1" width="3" height="3"/><rect x="10.500" y="6.500" width="3" height="3"/></g></svg>
<!-- opacity slider -->
<svg style="left:1272px;top:613px" width="87" height="9" viewBox="0 0 87 9"><defs><pattern id="ck" width="8" height="8" patternUnits="userSpaceOnUse"><rect width="8" height="8" fill="#fff"/><rect width="4" height="4" fill="#c8c8c8"/><rect x="4" y="4" width="4" height="4" fill="#c8c8c8"/></pattern><linearGradient id="ckf" x1="0" x2="1" y1="0" y2="0"><stop offset="0" stop-color="#e6e6e6" stop-opacity="0"/><stop offset="1" stop-color="#d8d8d8" stop-opacity="1"/></linearGradient></defs><rect x="0" y="0" width="84" height="8.500" fill="url(#ck)"/><rect x="0" y="0" width="84" height="8.500" fill="url(#ckf)"/><rect x="0.400" y="0.400" width="83.200" height="7.700" fill="none" stroke="#5a5a5c" stroke-width="0.800"/></svg>
<div class="abs" style="left:1356px;top:608px;width:3px;height:20px;background:#6a6a6d;border:1px solid #555557"></div>
<svg style="left:1383px;top:611px" width="10" height="14" viewBox="0 0 10 14"><path d="M0 5 L5 0 L10 5Z M0 9 L10 9 L5 14Z" fill="#3c3c3e"/></svg>
<!-- row2 buttons -->
<div class="btn" style="left:1138px;top:629px;width:38px;height:20px"></div>
<div class="abs" style="left:1140px;top:631px;width:18px;height:16px;background:#737377;border:1px solid #1e1e1e"></div>
<svg style="left:1164px;top:637px" width="9" height="5"><path d="M0 0H9L4.500 5Z" fill="#48484a"/></svg>
<svg style="left:1187px;top:631px" width="17" height="13" viewBox="0 0 17 13"><ellipse cx="8.500" cy="8" rx="7.500" ry="4.500" fill="#0c0c0c"/><rect x="1" y="4.500" width="15" height="3.500" fill="#0c0c0c"/><ellipse cx="8.500" cy="4.500" rx="7.300" ry="3.600" fill="#8a8a8d" stroke="#0c0c0c" stroke-width="1.200" stroke-dasharray="2 0.800"/><ellipse cx="8.500" cy="8.600" rx="5.500" ry="2" fill="#0c0c0c" stroke="#e8e8e8" stroke-width="0.900"/></svg>
<svg style="left:1209px;top:630px" width="12" height="17" viewBox="0 0 12 17"><path d="M4.500 5 L7.500 5 L8.500 16 L3.500 16Z" fill="#f0f0f0" stroke="#222" stroke-width="0.800"/><rect x="4.200" y="1.500" width="3.600" height="3.500" fill="#222"/><path d="M3.500 9 L8.500 9 L8.700 11.500 L3.300 11.500Z" fill="#222"/><path d="M0 1 L3.500 3 L0 5Z M12 1 L8.500 3 L12 5Z" fill="#c8c8ca"/></svg>
<svg style="left:1230px;top:630px" width="10" height="18" viewBox="0 0 10 18"><path d="M1 1.500 L9 1.500 L9 9 L5 17 L1 9Z" fill="#2aa0d8"/><path d="M1 1.500 L3.600 0.500 L3.600 9 L1 9Z" fill="#1878b0"/><path d="M6.400 0.500 L9 1.500 L9 9 L6.400 9Z" fill="#5cc4ee"/><path d="M1 9 L9 9 L6.300 14.400 L3.700 14.400Z" fill="#f0d060"/><path d="M3.700 14.400 L6.300 14.400 L5 17.300Z" fill="#333"/></svg>
<svg style="left:1247px;top:630px" width="15" height="17" viewBox="0 0 15 17"><path d="M4 8 L4 5 Q4 1.200 7.500 1.200 Q11 1.200 11 5 L11 8" fill="none" stroke="#111" stroke-width="2"/><rect x="1" y="7.500" width="13" height="9" fill="#3a3a3a" stroke="#111" stroke-width="1"/><rect x="2.500" y="9" width="10" height="6" fill="#666"/><rect x="6.600" y="10" width="1.800" height="4" fill="#eee"/></svg>
<svg style="left:1266px;top:631px" width="18" height="17" viewBox="0 0 18 17"><g opacity="0.55"><path d="M2.500 5 L2.500 3 Q2.500 0.800 5 0.800 Q7.500 0.800 7.500 3 L7.500 5" fill="none" stroke="#a0a0a2" stroke-width="1.400"/><rect x="0.500" y="4.800" width="9" height="6.500" fill="#a0a0a2"/><path d="M9 16 L9 11 L16 11 M12 16 L12 13.500 L17 13.500" fill="none" stroke="#a0a0a2" stroke-width="1.500"/></g></svg>
<div class="btn" style="left:1286px;top:629px;width:35px;height:20px;opacity:.75"></div>
<svg style="left:1289px;top:631px" width="30" height="17" viewBox="0 0 30 17"><g opacity="0.6"><rect x="0.500" y="0.500" width="14" height="15" fill="#929296"/><path d="M3 12 L5 5 L7.500 8 L10 3 L12 12Z" fill="#b4b4b8"/><path d="M8 9 L13 15 M13 9 L8 15" stroke="#6a6a6c" stroke-width="1.800"/></g><path d="M20 6.500 H28 L24 11Z" fill="#6a6a6d"/></svg>
<div class="btn" style="left:1322px;top:629px;width:36px;height:20px"></div>
<svg style="left:1324px;top:630px" width="33" height="19" viewBox="0 0 33 19"><path d="M1.500 1.500 L13 1.500 L1.500 17.500Z" fill="#58b8f4" stroke="#151515" stroke-width="1.200"/><path d="M4 4.500 L8 4.500 L4 9.500Z" fill="#2a2a2a"/><path d="M10 10.500 L16 17 M16 10.500 L10 17" stroke="#e01010" stroke-width="2.400"/><path d="M22 7 H31 L26.500 12Z" fill="#3c3c3e"/></svg>
<div class="btn" style="left:1359px;top:629px;width:36px;height:20px"></div>
<svg style="left:1362px;top:631px" width="33" height="17" viewBox="0 0 33 17"><rect x="7" y="6" width="10" height="10" fill="#fff"/><rect x="2" y="1" width="10.500" height="10.500" fill="#3b8af0"/><path d="M21.500 6 H30.500 L26 11Z" fill="#3c3c3e"/></svg>
<!-- row3 -->
<div class="abs" style="left:1138px;top:651px;width:258px;height:1px;background:#6c6c6f"></div>
<svg style="left:1139px;top:654px" width="17" height="17" viewBox="0 0 17 17"><g stroke="#222" stroke-width="0.900" fill="#f4f4f4"><path d="M1 13 L8.500 10.500 L16 13 L8.500 15.800Z"/><path d="M1 9.800 L8.500 7.300 L16 9.800 L8.500 12.500Z"/><path d="M1 6.600 L8.500 4.100 L16 6.600 L8.500 9.300Z"/><path d="M1 3.400 L8.500 1 L16 3.400 L8.500 6Z"/></g></svg>
<svg style="left:1238px;top:654px" width="15" height="17" viewBox="0 0 15 17"><path d="M1 1 L14 1 L14 11.500 L9.500 16 L1 16Z" fill="#fafcff" stroke="#222" stroke-width="1.200"/><path d="M14 11.500 L9.500 11.500 L9.500 16Z" fill="#333"/></svg>
<svg style="left:1256px;top:654px" width="19" height="18" viewBox="0 0 19 18"><path d="M1 1 L13.500 1 L13.500 16 L1 16Z" fill="#f4f8ff" stroke="#222" stroke-width="1.200"/><path d="M10 10.500 L12.500 9 L17.500 9 L17.500 15 L15 17 L10 17Z" fill="#e8e8e8" stroke="#333" stroke-width="0.800"/><path d="M10 10.500 L15 10.500 L17.500 9 M15 10.500 L15 17" fill="none" stroke="#333" stroke-width="0.800"/></svg>
<svg style="left:1276px;top:655px" width="18" height="16" viewBox="0 0 18 16"><path d="M0.600 2 L6 2 L7 3.500 L11 3.500 L11 12.500 L0.600 12.500Z" fill="#b8b8ba" stroke="#222" stroke-width="0.900"/><path d="M8 6 L17 6 L17 12 L14 15.200 L8 15.200Z" fill="#f6f6f6" stroke="#222" stroke-width="0.900"/><path d="M17 12 L14 12 L14 15.200Z" fill="#333"/></svg>
<svg style="left:1298px;top:655px" width="15" height="16" viewBox="0 0 15 16"><g fill="#98989b"><path d="M5.500 1 H9.500 V5 H12 L7.500 9.500 L3 5 H5.500Z"/><path d="M0.500 10 L7.500 7.500 L14.500 10 L7.500 12.800Z"/><path d="M0.500 12.500 L7.500 15.500 L14.500 12.500 L14.500 13.500 L7.500 16 L0.500 13.500Z"/></g></svg>
<svg style="left:1317px;top:654px" width="16" height="17" viewBox="0 0 16 17"><path d="M0.800 10.500 L8 8 L15.200 10.500 L8 13.500Z" fill="#fff" stroke="#111" stroke-width="0.900"/><path d="M0.800 13 L8 16 L15.200 13" fill="none" stroke="#111" stroke-width="1.200"/><path d="M5.500 0.800 H10.500 V5 H13.500 L8 11 L2.500 5 H5.500Z" fill="#fff" stroke="#111" stroke-width="1.200"/><path d="M1 4 L4 6.500 M15 4 L12 6.500" stroke="#111" stroke-width="1.200"/></svg>
<svg style="left:1337px;top:657px" width="17" height="10" viewBox="0 0 17 10"><rect x="0.500" y="0.500" width="16" height="9" fill="#3a3a3a" stroke="#111" stroke-width="1"/><circle cx="8.500" cy="5" r="3.200" fill="#fff"/></svg>
<svg style="left:1356px;top:654px" width="17" height="17" viewBox="0 0 17 17"><g fill="#909093"><path d="M2 6 H5 V11 H7 L3.500 16 L0 11 H2Z"/><path d="M6 1.500 L15 1.500 L15 9 L6 9Z" opacity=".7"/><circle cx="11" cy="6" r="3.500" opacity=".9"/><path d="M8 10 L16 13 L8 16Z" opacity=".6"/></g></svg>
<svg style="left:1378px;top:653px" width="14" height="18" viewBox="0 0 14 18"><path d="M2 6 L3.300 17 L10.700 17 L12 6Z" fill="#fff" stroke="#222" stroke-width="1"/><ellipse cx="7" cy="5.500" rx="6" ry="2" fill="#e8e8e8" stroke="#222" stroke-width="1"/><path d="M4 5 Q7 -1.500 10 5" fill="none" stroke="#222" stroke-width="1.100"/><path d="M5 8.500V15M7 8.500V15M9 8.500V15" stroke="#444" stroke-width="0.900"/></svg>
<!-- eyes -->
<svg style="left:1145px;top:688px" width="12" height="9" viewBox="0 0 12 9" id="eye1"><path d="M0.300 4.800 Q6 -2 11.700 4.800 Q6 10 0.300 4.800Z" fill="#fff" stroke="#111" stroke-width="0.800"/><circle cx="5.600" cy="4.500" r="2.700" fill="#111"/><circle cx="4.800" cy="3.500" r="0.800" fill="#fff"/><path d="M0.300 4.200 Q6 -2.500 11.700 4.200" fill="none" stroke="#111" stroke-width="1.400"/></svg>
<svg style="left:1145px;top:721px" width="12" height="9" viewBox="0 0 12 9"><path d="M0.300 4.800 Q6 -2 11.700 4.800 Q6 10 0.300 4.800Z" fill="#fff" stroke="#111" stroke-width="0.800"/><circle cx="5.600" cy="4.500" r="2.700" fill="#111"/><circle cx="4.800" cy="3.500" r="0.800" fill="#fff"/><path d="M0.300 4.200 Q6 -2.500 11.700 4.200" fill="none" stroke="#111" stroke-width="1.400"/></svg>
<svg style="left:1145px;top:754px" width="12" height="9" viewBox="0 0 12 9"><path d="M0.300 4.800 Q6 -2 11.700 4.800 Q6 10 0.300 4.800Z" fill="#fff" stroke="#111" stroke-width="0.800"/><circle cx="5.600" cy="4.500" r="2.700" fill="#111"/><circle cx="4.800" cy="3.500" r="0.800" fill="#fff"/><path d="M0.300 4.200 Q6 -2.500 11.700 4.200" fill="none" stroke="#111" stroke-width="1.400"/></svg>
<!-- pen -->
<svg style="left:1164px;top:686px" width="13" height="12" viewBox="0 0 13 12"><path d="M0.500 11.500 L4 7 Q9 5 12.500 0.500 Q11 6 6 9.500Z" fill="#eee" stroke="#111" stroke-width="0.900"/><path d="M0.500 11.500 L5 8" stroke="#111" stroke-width="0.800"/></svg>
<!-- layer1 thumb -->
<svg style="left:1184px;top:677px" width="38" height="30" viewBox="0 0 38 30"><defs><pattern id="ck2" width="8" height="8" patternUnits="userSpaceOnUse"><rect width="8" height="8" fill="#fff"/><rect width="4" height="4" fill="#d0d0d0"/><rect x="4" y="4" width="4" height="4" fill="#d0d0d0"/></pattern></defs><rect x="0.500" y="0.500" width="37" height="29" fill="#7f97a6" stroke="#151515" stroke-width="1"/><rect x="2.500" y="2.500" width="33" height="25" fill="#4e4e50" stroke="#151515" stroke-width="0.800"/><rect x="3" y="3" width="32" height="20" fill="url(#ck2)"/><path d="M12 15 L22 9 L30 13 L24 19 L16 18Z" fill="#b0b0b0"/></svg>
<svg style="left:1204px;top:677px" width="20" height="20" viewBox="0 0 20 20"><defs><linearGradient id="dg" x1="0" y1="0" x2="1" y2="1"><stop offset="0" stop-color="#000"/><stop offset="1" stop-color="#777"/></linearGradient></defs><rect x="0.500" y="0.500" width="18.500" height="18.500" fill="#fff" stroke="#111" stroke-width="1"/><path d="M2.500 9 L9 2.500 L17 9.500 L10.500 16.500Z" fill="url(#dg)"/><rect x="12" y="11.500" width="5.500" height="6" fill="#e4e4e4" stroke="#444" stroke-width="0.700"/></svg>
<svg style="left:1224px;top:688px" width="9" height="8" viewBox="0 0 9 8"><path d="M0.500 4 L3 7 L8.500 0.500" fill="none" stroke="#151515" stroke-width="1.300"/></svg>
<svg style="left:1236px;top:683px" width="18" height="18" viewBox="0 0 18 18"><path d="M1 1 L14 1 L1 17Z" fill="#58b8f4" stroke="#151515" stroke-width="1"/><rect x="5.500" y="8" width="12" height="9" fill="#f6f0b4" stroke="#666" stroke-width="0.600"/><path d="M4 4 L14 15 M14 4 L4 15" stroke="#e01010" stroke-width="1.800"/></svg>
<!-- layer2 thumb -->
<div class="abs" style="left:1186px;top:712px;width:34px;height:26px;background:linear-gradient(#f6d3e6,#e2e2f3 55%,#d4efff);border:1px solid #56565a"></div>
<svg style="left:1204px;top:710px" width="20" height="20" viewBox="0 0 20 20"><defs><linearGradient id="bg2" x1="1" y1="0" x2="0" y2="1"><stop offset="0" stop-color="#dff0ff"/><stop offset="0.500" stop-color="#2c8cf0"/><stop offset="1" stop-color="#0a50e0"/></linearGradient></defs><rect x="0.500" y="0.500" width="18.500" height="18.500" fill="#fff" stroke="#111" stroke-width="1"/><rect x="3" y="3" width="13.500" height="13.500" fill="url(#bg2)"/><rect x="12" y="11.500" width="5.500" height="6" fill="#e4e4e4" stroke="#444" stroke-width="0.700"/></svg>
<svg style="left:1224px;top:721px" width="9" height="8" viewBox="0 0 9 8"><path d="M0.500 4 L3 7 L8.500 0.500" fill="none" stroke="#151515" stroke-width="1.300"/></svg>
<div class="abs" style="left:1235px;top:712px;width:34px;height:26px;border:1px solid #151515;background:linear-gradient(#58585a 0,#58585a 3px,#fff 3px,#fff 20px,#58585a 20px)"></div>
<!-- paper -->
<div class="abs" style="left:1186px;top:745px;width:34px;height:26px;background:#c2c2c2;border:1px solid #151515"></div>
<svg style="left:1226px;top:744px" width="21" height="20" viewBox="0 0 21 20"><rect x="0.500" y="0.500" width="19.500" height="19" fill="#fff" stroke="#111" stroke-width="1"/><path d="M4 3 L11.500 3 L16 7.500 L16 17.500 L4 17.500Z" fill="#f4f8ff" stroke="#111" stroke-width="1"/><path d="M11.500 3 L11.500 7.500 L16 7.500" fill="none" stroke="#111" stroke-width="1"/></svg>


<style>
.lbar{position:absolute;top:734px;height:28px;background:#8b8e93;border:1px solid #1f1f21}
.lrow{position:absolute;left:387px;width:325px;height:40px;border:1px solid #dcdcdc;background:#7c7c81}
.cy{position:absolute;left:497px;width:32px;height:32px;background:#8fd7e3}
.noi{position:absolute;left:504px;width:19px;height:23px;border:1.5px solid #d8f2f6;}
.trk{position:absolute;left:539px;width:118px;height:9px;background:#68686b;border:1px solid #58585a}
.hdl{position:absolute;width:4px;height:20px;background:#6e6e71;border:1px solid #505052}
</style>
<div class="lbar" style="left:452px;width:186px"></div>
<div class="lbar" style="left:645px;width:86px"></div>
<div class="abs" style="left:513px;top:736px;width:1px;height:24px;background:#6e7074"></div>
<div class="abs" style="left:605px;top:736px;width:1px;height:24px;background:#6e7074"></div>
<svg style="left:452px;top:734px" width="280" height="28" viewBox="0 0 280 28">
<g fill="none" stroke="#5a5c60" stroke-width="3"><path d="M17 8.500 L12.500 14 L17 19.500"/><path d="M41 8.500 L45.500 14 L41 19.500"/></g>
<!-- folder camera -->
<path d="M69.500 9 L74 9 L75.500 11 L81 11 L81 14 L73 14 L69.500 21.500Z" fill="#e8e8ea" stroke="#3c3c3e" stroke-width="0.900"/><path d="M73 14 L88 14 L84 21.500 L69.500 21.500Z" fill="#f4f4f6" stroke="#3c3c3e" stroke-width="0.900"/><circle cx="82.500" cy="7.500" r="4.600" fill="#d4d4d6" stroke="#48484a" stroke-width="1"/><circle cx="83" cy="7" r="2.200" fill="#fff"/><rect x="76" y="9.500" width="9" height="5" rx="1" fill="#58585a"/>
<!-- focus -->
<g fill="none" stroke="#4e5054" stroke-width="1.500"><path d="M100.500 11 V7.500 H104 M110.500 7.500 H114 V11 M114 17.500 V21 H110.500 M104 21 H100.500 V17.500"/><path d="M107.300 11 V17.500 M104 14.300 H110.600" stroke-width="1.300"/></g>
<!-- stamp -->
<path d="M125.500 19 L135 15 L144.500 19 L135 23Z" fill="#e0e0e2" stroke="#4a4a4c" stroke-width="0.800"/><path d="M131 13.500 L134 12 L139.500 12 L139.500 17 L136.500 19 L131 19Z" fill="#f2f2f4" stroke="#58585a" stroke-width="0.700"/><path d="M133.700 4 H136.300 V8 H138.500 L135 11.500 L131.500 8 H133.700Z" fill="#3a3a3c"/>
<!-- spinner -->
<g stroke="#eeeeee" stroke-width="2" stroke-linecap="round"><path d="M170.500 6 V8.500"/><path d="M176.200 8.200 L174.600 10"/><path d="M178.500 13.800 H176.200"/><path d="M176.300 19.500 L174.700 17.800"/><path d="M170.500 22 V19.600"/><path d="M164.700 19.500 L166.300 17.800"/><path d="M162.500 13.800 H164.800"/><path d="M164.800 8.200 L166.400 10"/></g>
<!-- sphere -->
<circle cx="208" cy="14.500" r="8.800" fill="#4a4a4c"/><g fill="none" stroke="#8b8e93" stroke-width="1.300"><path d="M200 11 Q207 13 213 6.500"/><path d="M199.500 15 Q209 17 216 9.500"/><path d="M201 19 Q211 20.500 217 14"/><path d="M204 22.500 Q212 23 216.500 18.500"/></g>
<!-- rotate -->
<circle cx="240" cy="10.500" r="4.300" fill="#3c3c3e"/><path d="M233 11 Q227 14 231.500 17.500 Q236 20.500 243.500 17" fill="none" stroke="#3c3c3e" stroke-width="2.200"/><path d="M236.500 8.500 L231 10 L234 14Z" fill="#3c3c3e"/><path d="M241 14.500 L245.500 16.800 L241.500 20Z" fill="#3c3c3e"/>
<!-- lamp -->
<path d="M260 2.500 L268.500 10 L264.500 17.500 Z" fill="#c8c8ca" stroke="#6a6a6c" stroke-width="0.600"/><path d="M260 2.500 L264.500 17.500 L261.500 11Z" fill="#e8e8ea"/><path d="M264.500 17.500 L267.500 22 L264.500 27 L261.500 22Z" fill="#f0f0f2" stroke="#6a6a6c" stroke-width="0.500"/>
</svg>
<!-- sub panel -->
<div class="abs" style="left:381px;top:762px;width:350px;height:173px;background:#565658;border:1px solid #1c1c1e;box-shadow:3px 3px 3px rgba(40,50,60,.45)"></div>
<div class="abs" style="left:386px;top:767px;width:339px;height:164px;background:#7c7c81;border:1px solid #3a3a3c"></div>
<div class="abs" style="left:712px;top:768px;width:12px;height:162px;background:linear-gradient(90deg,#5a5a5c,#6b6b6e 40%,#6b6b6e)"></div>
<div class="lrow" style="top:768px"></div>
<div class="lrow" style="top:808px"></div>
<div class="lrow" style="top:848px"></div>
<div class="tx" style="left:392.500px;top:778.500px;font-size:12.500px"><span style="display:inline-block;transform-origin:0 50%;transform:scaleX(0.9594)">砲塔</span></div>
<div class="tx" style="left:392.500px;top:818.500px;font-size:12.500px"><span style="display:inline-block;transform-origin:0 50%;transform:scaleX(0.9594)">砲身</span></div>
<div class="tx" style="left:392px;top:857.500px;font-size:12.500px"><span style="display:inline-block;transform-origin:0 50%;transform:scaleX(0.7679)">ルートのポリーを回す</span></div>
<div class="cy" style="top:772px"></div><div class="cy" style="top:812px"></div><div class="cy" style="top:852px"></div>
<div class="noi" style="top:777px"></div><div class="noi" style="top:817px"></div><div class="noi" style="top:857px"></div>
<div class="tx" style="left:506px;top:781px;font-size:9px;color:#d8f2f6;font-weight:bold"><span style="display:inline-block;transform-origin:0 50%;transform:scaleX(1.1111)">NO</span></div>
<div class="tx" style="left:506px;top:821px;font-size:9px;color:#d8f2f6;font-weight:bold"><span style="display:inline-block;transform-origin:0 50%;transform:scaleX(1.1111)">NO</span></div>
<div class="tx" style="left:506px;top:861px;font-size:9px;color:#d8f2f6;font-weight:bold"><span style="display:inline-block;transform-origin:0 50%;transform:scaleX(1.1111)">NO</span></div>
<div class="abs" style="left:506px;top:794px;width:15px;height:3px;background:#d8f2f6"></div>
<div class="abs" style="left:506px;top:834px;width:15px;height:3px;background:#d8f2f6"></div>
<div class="abs" style="left:506px;top:874px;width:15px;height:3px;background:#d8f2f6"></div>
<div class="trk" style="top:783px;background:#69a6c6;border-color:#5e9cbc"></div>
<div class="trk" style="top:823px"></div>
<div class="trk" style="top:863px"></div>
<div class="hdl" style="left:608px;top:778px;background:#5ea2c6;border-color:#4e90b4"></div>
<div class="hdl" style="left:641px;top:818px"></div>
<div class="hdl" style="left:537px;top:858px"></div>
<div class="tx" style="left:676px;top:782.500px;font-size:12.500px"><span style="display:inline-block;transform-origin:0 50%;transform:scaleX(0.8629)">60</span></div>
<div class="tx" style="left:676px;top:822.500px;font-size:12.500px"><span style="display:inline-block;transform-origin:0 50%;transform:scaleX(0.8629)">88</span></div>
<div class="tx" style="left:682px;top:861.500px;font-size:12.500px"><span style="display:inline-block;transform-origin:0 50%;transform:scaleX(0.7910)">0</span></div>

</body>
</html>
